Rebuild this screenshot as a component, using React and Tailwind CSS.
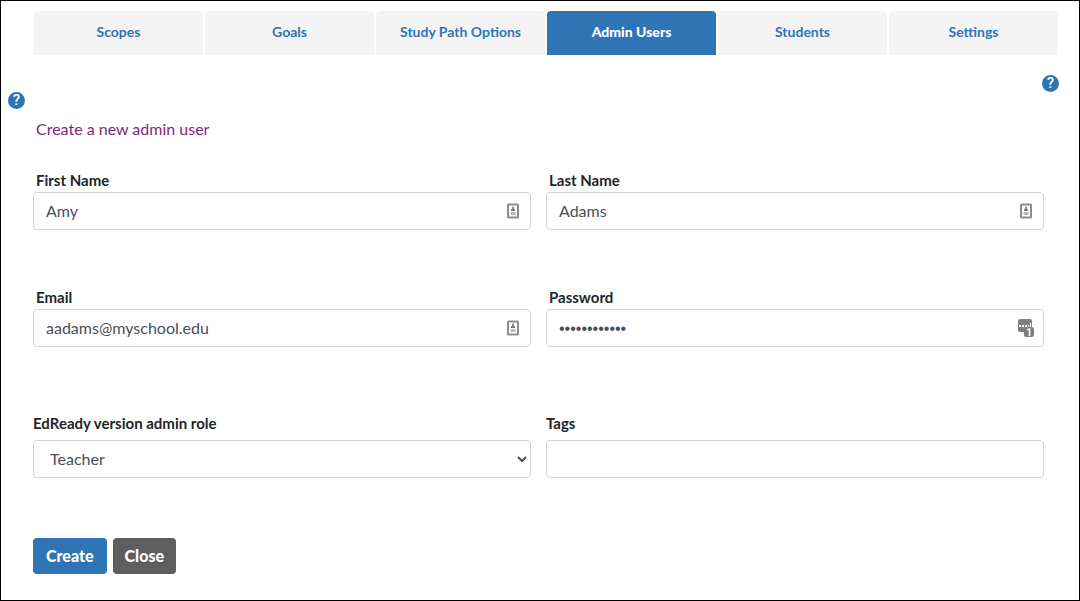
import { useState } from "react";

const tabs = [
  "Scopes",
  "Goals",
  "Study Path Options",
  "Admin Users",
  "Students",
  "Settings",
];

const controlClass =
  "block h-[38px] w-full rounded border border-[#ced4da] bg-white px-3 text-base text-[#495057] outline-none focus:border-[#2f74b5]";

const labelClass = "block text-[15px] leading-6 font-bold";

function HelpButton({ label }) {
  return (
    <button
      aria-label={label}
      className="flex h-[17px] w-[17px] items-center justify-center rounded-full bg-[#2f74b5] font-[Roboto,sans-serif] text-[15px] leading-none font-medium text-white"
      type="button"
    >
      ?
    </button>
  );
}

function ContactIcon() {
  return (
    <svg width="12" height="16" viewBox="0 0 12 16" aria-hidden="true">
      <rect x="1" y="1.5" width="10" height="13" rx="0.5" fill="#fff" stroke="#8c8c8c" strokeWidth="2" />
      <path d="M5.2 3.5h1.6v2L8 6.5V8H4V6.5l1.2-1z" fill="#7a7a7a" />
      <path d="M3.5 9h5v3h-5z" fill="#b9b9b9" />
    </svg>
  );
}

function PasswordIcon() {
  return (
    <svg width="16" height="22" viewBox="0 -2 16 22" aria-hidden="true">
      <rect width="14" height="13" rx="2" fill="#7f7f7f" />
      <path d="M1.2 6h1.8v2H1.2zM4.200 6H6v2H4.200zM7.200 6H9v2H7.200zM10.200 6h1v2h-1zM12 4h1v4h-1z" fill="#fff" />
      <rect x="6" y="8" width="10" height="10" rx="2" fill="#7f7f7f" />
      <text x="11" y="16.5" fill="#fff" fontFamily="Roboto, sans-serif" fontSize="10" fontWeight="700" textAnchor="middle">
        1
      </text>
    </svg>
  );
}

function Field({ id, label, type = "text", icon, value, onChange }) {
  return (
    <div>
      <label className={`${labelClass} pl-[3px]`} htmlFor={id}>
        {label}
      </label>
      <div className="relative">
        <input
          autoComplete="off"
          className={`${controlClass} ${
            type === "password"
              ? "pt-0.5 font-['Liberation_Sans',sans-serif]"
              : "pb-0.5"
          }`}
          id={id}
          name={id}
          onChange={onChange}
          type={type}
          value={value}
        />
        <span className="pointer-events-none absolute inset-y-0 right-0 flex w-9 items-center justify-center">
          {icon}
        </span>
      </div>
    </div>
  );
}

export default function App() {
  const [activeTab, setActiveTab] = useState("Admin Users");
  const [form, setForm] = useState({
    firstName: "Amy",
    lastName: "Adams",
    email: "aadams@myschool.edu",
    password: "readyteacher",
    role: "Teacher",
    tags: "",
  });

  const handleChange = (event) => {
    const { name, value } = event.target;
    setForm((current) => ({ ...current, [name]: value }));
  };

  return (
    <main className="min-h-screen border border-black bg-white pt-2.5 pb-6 font-[Lato,sans-serif] text-[#212529]">
      <nav className="mr-[21px] ml-[33px] grid grid-cols-6 gap-0.5">
        {tabs.map((tab) => (
          <button
            className={`h-11 rounded-t pb-0.5 text-sm ${
              tab === activeTab
                ? "bg-[#2f74b5] font-black text-white"
                : "bg-[#f4f4f4] font-bold text-[#2f74b5]"
            }`}
            key={tab}
            onClick={() => setActiveTab(tab)}
            type="button"
          >
            {tab}
          </button>
        ))}
      </nav>

      <div className="mt-5 mr-5 flex justify-end">
        <HelpButton label="Help with admin users" />
      </div>
      <div className="ml-[7px] flex">
        <HelpButton label="Help with creating an admin user" />
      </div>

      <form
        className="mr-[35px] ml-8"
        onSubmit={(event) => event.preventDefault()}
      >
        <h1 className="mt-2 pl-[3px] text-base leading-6 text-[#7b2a7b]">
          Create a new admin user
        </h1>

        <div className="mt-[27px] grid grid-cols-2 gap-x-[15px] gap-y-[55px]">
          <Field
            icon={<ContactIcon />}
            id="firstName"
            label="First Name"
            onChange={handleChange}
            value={form.firstName}
          />
          <Field
            icon={<ContactIcon />}
            id="lastName"
            label="Last Name"
            onChange={handleChange}
            value={form.lastName}
          />
          <Field
            icon={<ContactIcon />}
            id="email"
            label="Email"
            onChange={handleChange}
            type="email"
            value={form.email}
          />
          <Field
            icon={<PasswordIcon />}
            id="password"
            label="Password"
            onChange={handleChange}
            type="password"
            value={form.password}
          />
        </div>

        <div className="mt-16 grid grid-cols-2 gap-x-[15px]">
          <div>
            <label className={`${labelClass} mb-[5px]`} htmlFor="role">
              EdReady version admin role
            </label>
            <select
              className={`${controlClass} pb-0.5`}
              id="role"
              name="role"
              onChange={handleChange}
              value={form.role}
            >
              <option>Teacher</option>
            </select>
          </div>
          <div>
            <label className={`${labelClass} mb-[5px]`} htmlFor="tags">
              Tags
            </label>
            <input
              className={controlClass}
              id="tags"
              name="tags"
              onChange={handleChange}
              type="text"
              value={form.tags}
            />
          </div>
        </div>

        <div className="mt-[60px] flex gap-1.5">
          <button
            className="h-9 rounded bg-[#2f74b5] px-[13px] text-base font-black text-white"
            type="submit"
          >
            Create
          </button>
          <button
            className="h-9 rounded bg-[#5e5e5e] px-3 text-base font-black text-white"
            type="button"
          >
            Close
          </button>
        </div>
      </form>
    </main>
  );
}
